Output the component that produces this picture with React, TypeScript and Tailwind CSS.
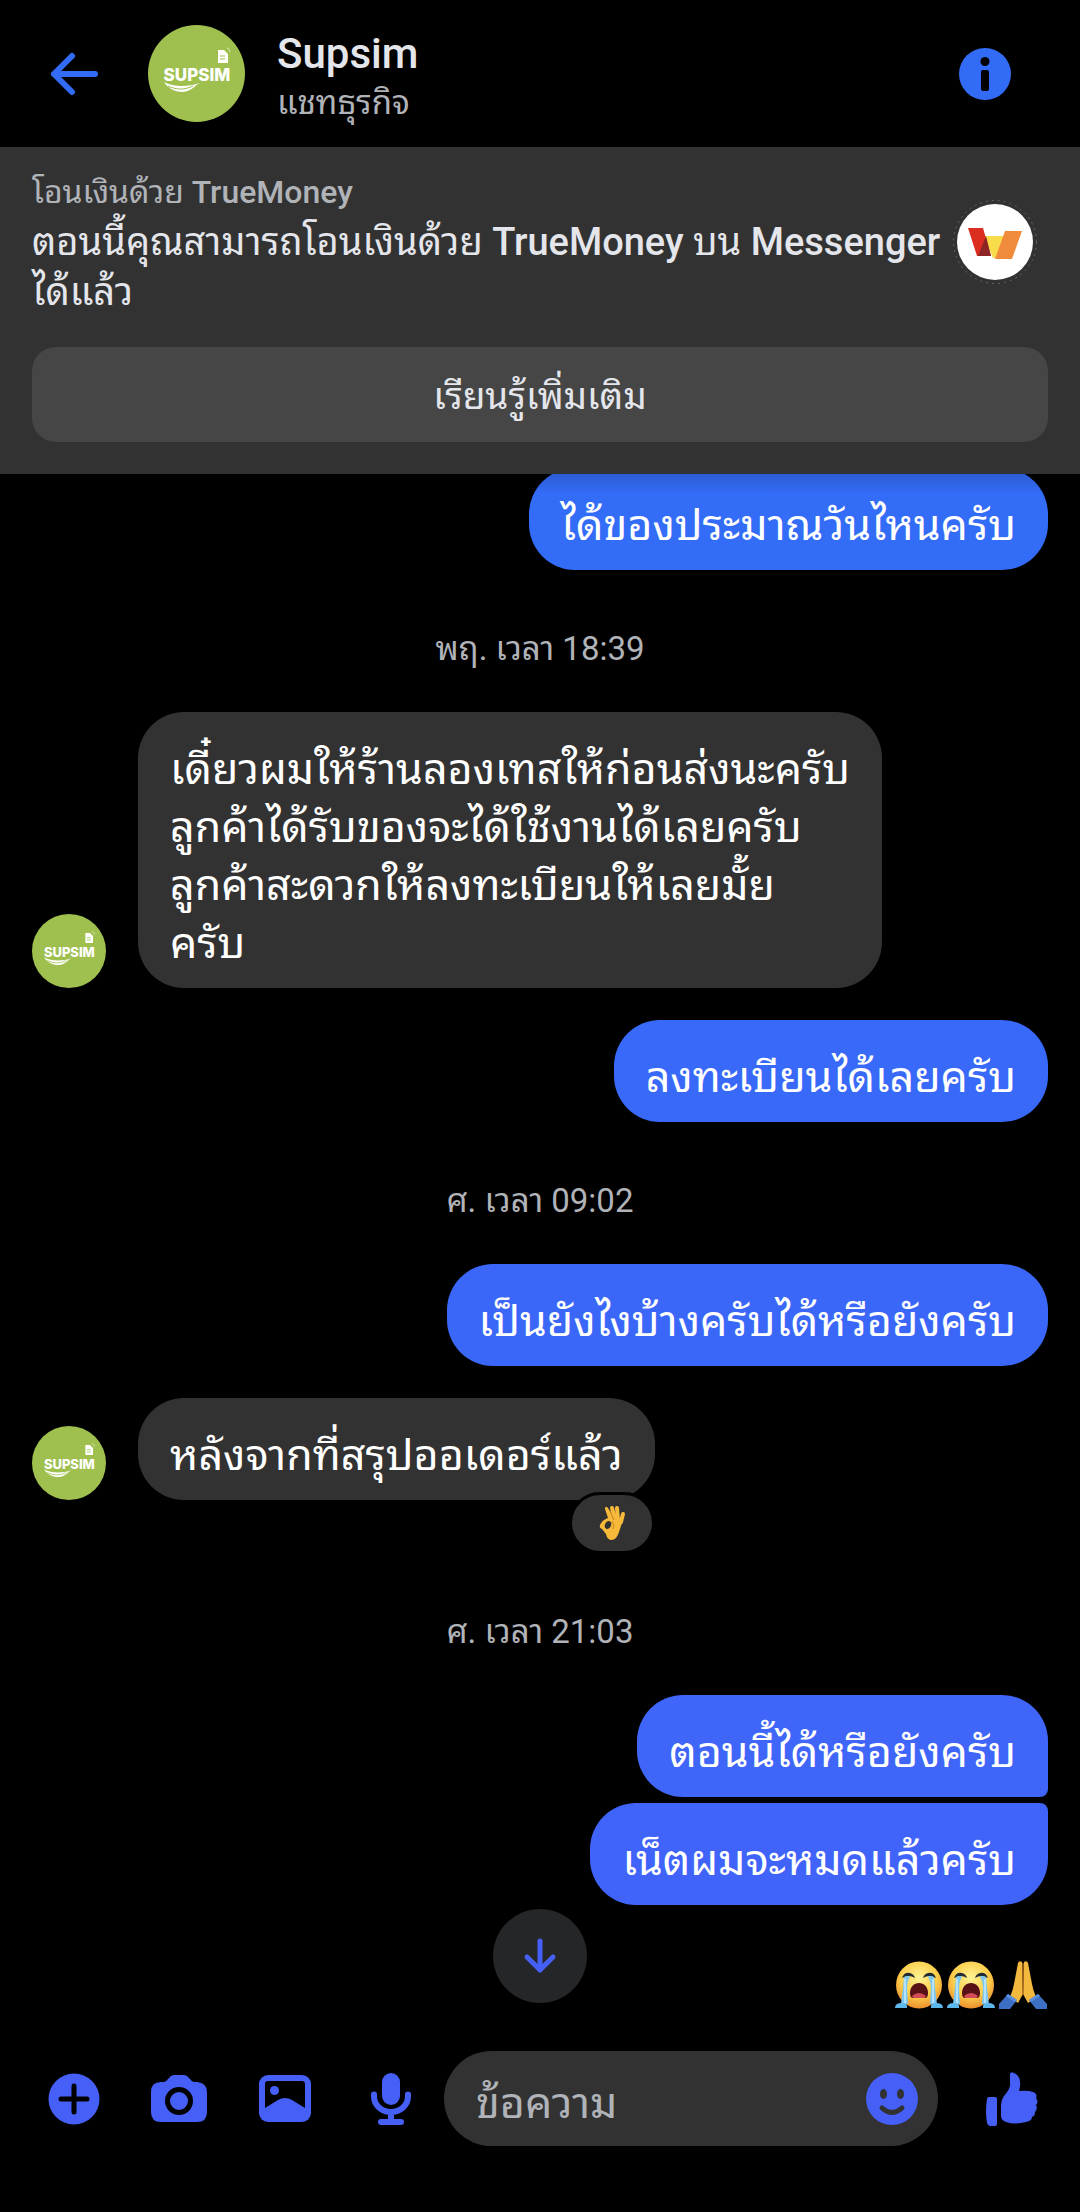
import type { ReactNode } from "react";

type Message = {
  id: number;
  text: string;
  mine?: boolean;
  className?: string;
  reaction?: boolean;
};

const FONT = "font-['Roboto','Noto_Sans_Thai_Looped','Loma','Noto_Sans_Thai','Noto_Sans',sans-serif]";

const Avatar = ({ className }: { className: string }) => (
  <svg viewBox="0 0 97 97" className={className} role="img" aria-label="Supsim">
    <circle cx="48.5" cy="48.5" r="48.5" fill="#9fc04f" />
    <text
      x="49"
      y="56"
      textAnchor="middle"
      fontSize="17"
      fontWeight="800"
      fill="#fff"
      className="font-['Inter',sans-serif]"
    >
      SUPSIM
    </text>
    <path d="M16 57c9 5 24 5 36 1-5 2-8 8-17 9-9 0-16-5-19-10z" fill="#fff" />
    <path d="M20 61c8 4 17 4 25 0" stroke="#9fc04f" strokeWidth="1" fill="none" />
    <path d="M70 25h6l4 4v9H70z" fill="#fff" />
    <path d="M72 31h5M72 34h5" stroke="#9fc04f" strokeWidth="1" />
    <path d="M79 23q3 1 3 4" stroke="#dbe8b8" strokeWidth="1" fill="none" />
  </svg>
);

const CryingFace = () => (
  <svg viewBox="0 0 50 48" className="h-12 w-[50px]" role="img" aria-label="😭">
    <defs>
      <radialGradient id="face" cx="50%" cy="35%" r="65%">
        <stop offset="0" stopColor="#fff394" />
        <stop offset="0.6" stopColor="#fbcf4b" />
        <stop offset="1" stopColor="#ee8f2e" />
      </radialGradient>
    </defs>
    <ellipse cx="25" cy="24" rx="23" ry="23.5" fill="url(#face)" />
    <path d="M8 17q2-6 8-5 4 1 5 5-6-4-13 0zM42 17q-2-6-8-5-4 1-5 5 6-4 13 0z" fill="#202b33" />
    <path d="M10 16q5-2 6 0-3 4-3 12l1 15H7q2-14 3-27zM40 16q-5-2-6 0 3 4 3 12l-1 15h7q-2-14-3-27z" fill="#7cc8f2" />
    <path d="M11 18v24M39 18v24" stroke="#c5ecff" strokeWidth="1.5" />
    <path d="M1 47q0-5 7-5 6 0 5 5zM49 47q0-5-7-5-6 0-5 5z" fill="#5fb6ea" />
    <path d="M16 32c0-6 4-10 9-10s9 4 9 10q0 5-3 5H19q-3 0-3-5z" fill="#581215" />
    <path d="M18 35q7-6 14 0-1 2-2 2H20q-1 0-2-2z" fill="#d24b57" />
  </svg>
);

const FoldedHands = () => (
  <svg viewBox="0 0 50 48" className="h-12 w-[50px]" role="img" aria-label="🙏">
    <path d="M24 1q-3-2-4 1l-4 21q-1 6-4 13l8 6 5-9zM26 1q3-2 4 1l4 21q1 6 4 13l-8 6-5-9z" fill="#f3b93e" />
    <path d="M25 2v32" stroke="#a86a1c" strokeWidth="1.5" />
    <path d="M10 33l9 6-7 9H1v-5zM40 33l-9 6 7 9h11v-5z" fill="#3d6fc4" />
    <path d="M10 33l9 6-2 2-9-6zM40 33l-9 6 2 2 9-6z" fill="#5b8fe0" />
  </svg>
);

const OkHand = () => (
  <svg viewBox="0 0 28 36" className="h-9 w-7" role="img" aria-label="👌">
    <path d="M17 15L14 3M20 15l-1-12M23 17l2-8" stroke="#f6b93a" strokeWidth="4" strokeLinecap="round" />
    <path
      d="M10 3q-3-3-3 1l3 9q-6 2-8 7-1 3 2 4l4 5q1 6 6 6 5-1 7-8l4-12-8-3q-4-3-7-9z"
      fill="#f6b93a"
    />
    <ellipse cx="10" cy="20" rx="3" ry="4" fill="#323232" transform="rotate(25 10 20)" />
    <path d="M14 16q3 3 1 8M16 15l-4-9" stroke="#c98520" strokeWidth="1" fill="none" />
  </svg>
);

const IconButton = ({
  label,
  className = "",
  children,
}: {
  label: string;
  className?: string;
  children: ReactNode;
}) => (
  <button type="button" aria-label={label} className={`shrink-0 ${className}`}>
    {children}
  </button>
);

const Header = () => (
  <header className="flex h-[147px] items-center pr-[69px] pl-12">
    <IconButton label="ย้อนกลับ">
      <svg viewBox="0 0 52 52" className="size-[52px]" fill="none" stroke="#326cf6" strokeWidth="6" strokeLinecap="round" strokeLinejoin="round">
        <path d="M47 26H6M24 8L6 26l18 18" />
      </svg>
    </IconButton>
    <Avatar className="ml-12 size-[97px] shrink-0" />
    <div className="ml-8 flex-1 pt-2">
      <h1 className="text-[42px] leading-[50px] font-medium text-[#e4e6eb]">Supsim</h1>
      <p className="text-[33px] leading-[48px] text-[#b0b3b8]">แชทธุรกิจ</p>
    </div>
    <IconButton label="ข้อมูล">
      <svg viewBox="0 0 52 52" className="size-[52px]">
        <circle cx="26" cy="26" r="26" fill="#326cf6" />
        <circle cx="26" cy="13.5" r="4.5" />
        <rect x="22" y="22" width="8" height="21" rx="2" />
      </svg>
    </IconButton>
  </header>
);

const Banner = () => (
  <section className="relative z-10 bg-[#323232] px-8 pt-5 pb-8">
    <div className="flex items-center gap-1">
      <div className="flex-1">
        <p className="text-[32px] leading-[50px] text-[#b0b3b8]">
          โอนเงินด้วย <span className="font-medium">TrueMoney</span>
        </p>
        <p className="text-[38px] leading-[50px] text-[#e4e6eb]">
          ตอนนี้คุณสามารถโอนเงินด้วย <span className="font-medium">TrueMoney</span> บน{" "}
          <span className="font-medium">Messenger</span> ได้แล้ว
        </p>
      </div>
      <svg viewBox="0 0 84 84" className="mr-[11px] size-[84px] shrink-0" role="img" aria-label="TrueMoney">
        <circle cx="42" cy="42" r="41.5" fill="none" stroke="#666" strokeWidth="1" strokeDasharray="2 4" />
        <circle cx="42" cy="42" r="38" fill="#fff" />
        <path d="M31 36h20L44 58h-4z" fill="#f9dc4a" />
        <path d="M15 28h15l8 28H24z" fill="#db2d20" />
        <path d="M33 36l5 20H25z" fill="#8e2525" />
        <path d="M52 31h17l-10 28H42z" fill="#f08b3c" />
      </svg>
    </div>
    <button
      type="button"
      className="mt-[30px] h-[95px] w-full rounded-3xl bg-[#464646] pt-1 text-[37px] text-[#e4e6eb]"
    >
      เรียนรู้เพิ่มเติม
    </button>
  </section>
);

const Timestamp = ({ children }: { children: ReactNode }) => (
  <p className="flex h-[142px] items-center justify-center pt-4 text-[33px] text-[#b0b3b8]">{children}</p>
);

const Bubble = ({ message }: { message: Message }) => {
  const { text, mine, className = "", reaction } = message;

  if (mine) {
    return (
      <div className="flex justify-end">
        <p className={`rounded-[46px] px-8 pt-7 pb-4 text-[43px] leading-[58px] whitespace-pre-line text-white ${className}`}>
          {text}
        </p>
      </div>
    );
  }

  return (
    <div className={`flex items-end gap-8 ${reaction ? "mb-[53px]" : ""}`}>
      <Avatar className="size-[74px] shrink-0" />
      <div className="relative">
        <p className="rounded-[46px] bg-[#323232] px-8 pt-7 pb-4 text-[43px] leading-[58px] whitespace-pre-line text-white">
          {text}
        </p>
        {reaction && (
          <span className="absolute top-[94px] right-0 flex h-[62px] w-[86px] items-center justify-center rounded-full border-[3px] border-black bg-[#323232]">
            <OkHand />
          </span>
        )}
      </div>
    </div>
  );
};

const Composer = () => (
  <form className="flex items-center pt-2 pr-[42px] pb-[66px] pl-12" onSubmit={(e) => e.preventDefault()}>
    <IconButton label="เพิ่ม">
      <svg viewBox="0 0 52 52" className="size-[52px]">
        <circle cx="26" cy="26" r="25.5" fill="#455ff7" />
        <path d="M26 13v26M13 26h26" stroke="#000" strokeWidth="5" strokeLinecap="round" />
      </svg>
    </IconButton>
    <IconButton label="กล้อง" className="ml-[51px]">
      <svg viewBox="0 0 56 52" className="h-[52px] w-14">
        <path
          d="M10 9h3q2 0 4-3l1-1q2-3 5-3h10q3 0 5 3l1 1q2 3 4 3h3q10 1 10 10v20q0 10-10 10H10Q0 49 0 39V19Q0 9 10 9z"
          fill="#455ff7"
        />
        <circle cx="28" cy="28" r="11.5" fill="#455ff7" stroke="#000" strokeWidth="5" />
      </svg>
    </IconButton>
    <IconButton label="รูปภาพ" className="ml-[52px]">
      <svg viewBox="0 0 52 52" className="size-[52px]">
        <rect x="0" y="2" width="52" height="47" rx="9" fill="#455ff7" />
        <path d="M9 8h34q3 0 3 3v24l-13-8q-7-4-14 0L6 35V11q0-3 3-3z" />
        <circle cx="15.5" cy="17.5" r="4.5" fill="#455ff7" />
      </svg>
    </IconButton>
    <IconButton label="ไมโครโฟน" className="ml-[60px]">
      <svg viewBox="0 0 40 52" className="h-[52px] w-10">
        <rect x="11" y="0" width="18" height="32" rx="9" fill="#455ff7" />
        <path d="M3 21.5v2a17 15.5 0 0 0 34 0v-2M20 40v9M10 49h20" fill="none" stroke="#455ff7" strokeWidth="6" strokeLinecap="round" />
      </svg>
    </IconButton>
    <div className="ml-[33px] flex h-[95px] min-w-0 flex-1 items-center rounded-full bg-[#323232] pr-5 pl-8">
      <input
        type="text"
        aria-label="ข้อความ"
        placeholder="ข้อความ"
        className="h-full min-w-0 flex-1 bg-transparent pt-2 text-[43px] text-white placeholder-[#b0b3b8] outline-none"
      />
      <IconButton label="อีโมจิ">
        <svg viewBox="0 0 52 52" className="size-[52px]">
          <circle cx="26" cy="26" r="26" fill="#455ff7" />
          <ellipse cx="17.5" cy="21" rx="3.5" ry="5" fill="#323232" />
          <ellipse cx="34.5" cy="21" rx="3.5" ry="5" fill="#323232" />
          <path d="M16 35q10 9 20 0" fill="none" stroke="#323232" strokeWidth="5" strokeLinecap="round" />
        </svg>
      </IconButton>
    </div>
    <IconButton label="ถูกใจ" className="ml-12">
      <svg viewBox="0 0 52 54" className="h-[54px] w-[52px]" fill="#455ff7">
        <path d="M3 25h6q2 0 2 2v25q0 2-2 2H4q-2 0-3-3Q-1 39 1 27q0-2 2-2z" />
        <path d="M24 2q1-3 4-1 7 3 6 13l-1 5q9-1 14 1 5 2 3 6 3 4 0 7 2 4-1 7 0 4-3 5 0 4-6 5-11 3-20 0-5-2-5-6V33q0-5 3-9 7-8 6-13z" />
      </svg>
    </IconButton>
  </form>
);

export default function App() {
  return (
    <div className={`flex min-h-screen flex-col bg-black ${FONT}`}>
      <Header />
      <Banner />

      <main className="relative flex-1 overflow-hidden px-8">
        <div className="absolute inset-x-0 top-0 z-10 h-5 bg-gradient-to-b from-black/15 to-transparent" />
        <div className="-mt-1.5">
          <Bubble message={{ id: 1, text: "ได้ของประมาณวันไหนครับ", mine: true, className: "bg-[#336cf7]" }} />
          <Timestamp>พฤ. เวลา 18:39</Timestamp>
          <div className="space-y-8">
            <Bubble
              message={{
                id: 2,
                text: "เดี๋ยวผมให้ร้านลองเทสให้ก่อนส่งนะครับ\nลูกค้าได้รับของจะได้ใช้งานได้เลยครับ\nลูกค้าสะดวกให้ลงทะเบียนให้เลยมั้ย\nครับ",
              }}
            />
            <Bubble message={{ id: 3, text: "ลงทะเบียนได้เลยครับ", mine: true, className: "bg-[#3869f8]" }} />
          </div>
          <Timestamp>ศ. เวลา 09:02</Timestamp>
          <div className="space-y-8">
            <Bubble message={{ id: 4, text: "เป็นยังไงบ้างครับได้หรือยังครับ", mine: true, className: "bg-[#3a67f8]" }} />
            <Bubble message={{ id: 5, text: "หลังจากที่สรุปออเดอร์แล้ว", reaction: true }} />
          </div>
          <Timestamp>ศ. เวลา 21:03</Timestamp>
          <div className="space-y-1.5">
            <Bubble message={{ id: 6, text: "ตอนนี้ได้หรือยังครับ", mine: true, className: "rounded-br-lg bg-[#3f65f9]" }} />
            <Bubble message={{ id: 7, text: "เน็ตผมจะหมดแล้วครับ", mine: true, className: "rounded-tr-lg bg-[#4064fa]" }} />
          </div>
          <div className="flex justify-end gap-0.5 pt-14 pb-8">
            <CryingFace />
            <CryingFace />
            <FoldedHands />
          </div>
        </div>
        <button
          type="button"
          aria-label="เลื่อนลง"
          className="absolute bottom-10 left-1/2 flex size-[94px] -translate-x-1/2 items-center justify-center rounded-full bg-[#252628]"
        >
          <svg viewBox="0 0 36 36" className="size-9" fill="none" stroke="#455ff7" strokeWidth="5" strokeLinecap="round" strokeLinejoin="round">
            <path d="M18 3v29M5 19l13 13 13-13" />
          </svg>
        </button>
      </main>

      <Composer />
    </div>
  );
}
